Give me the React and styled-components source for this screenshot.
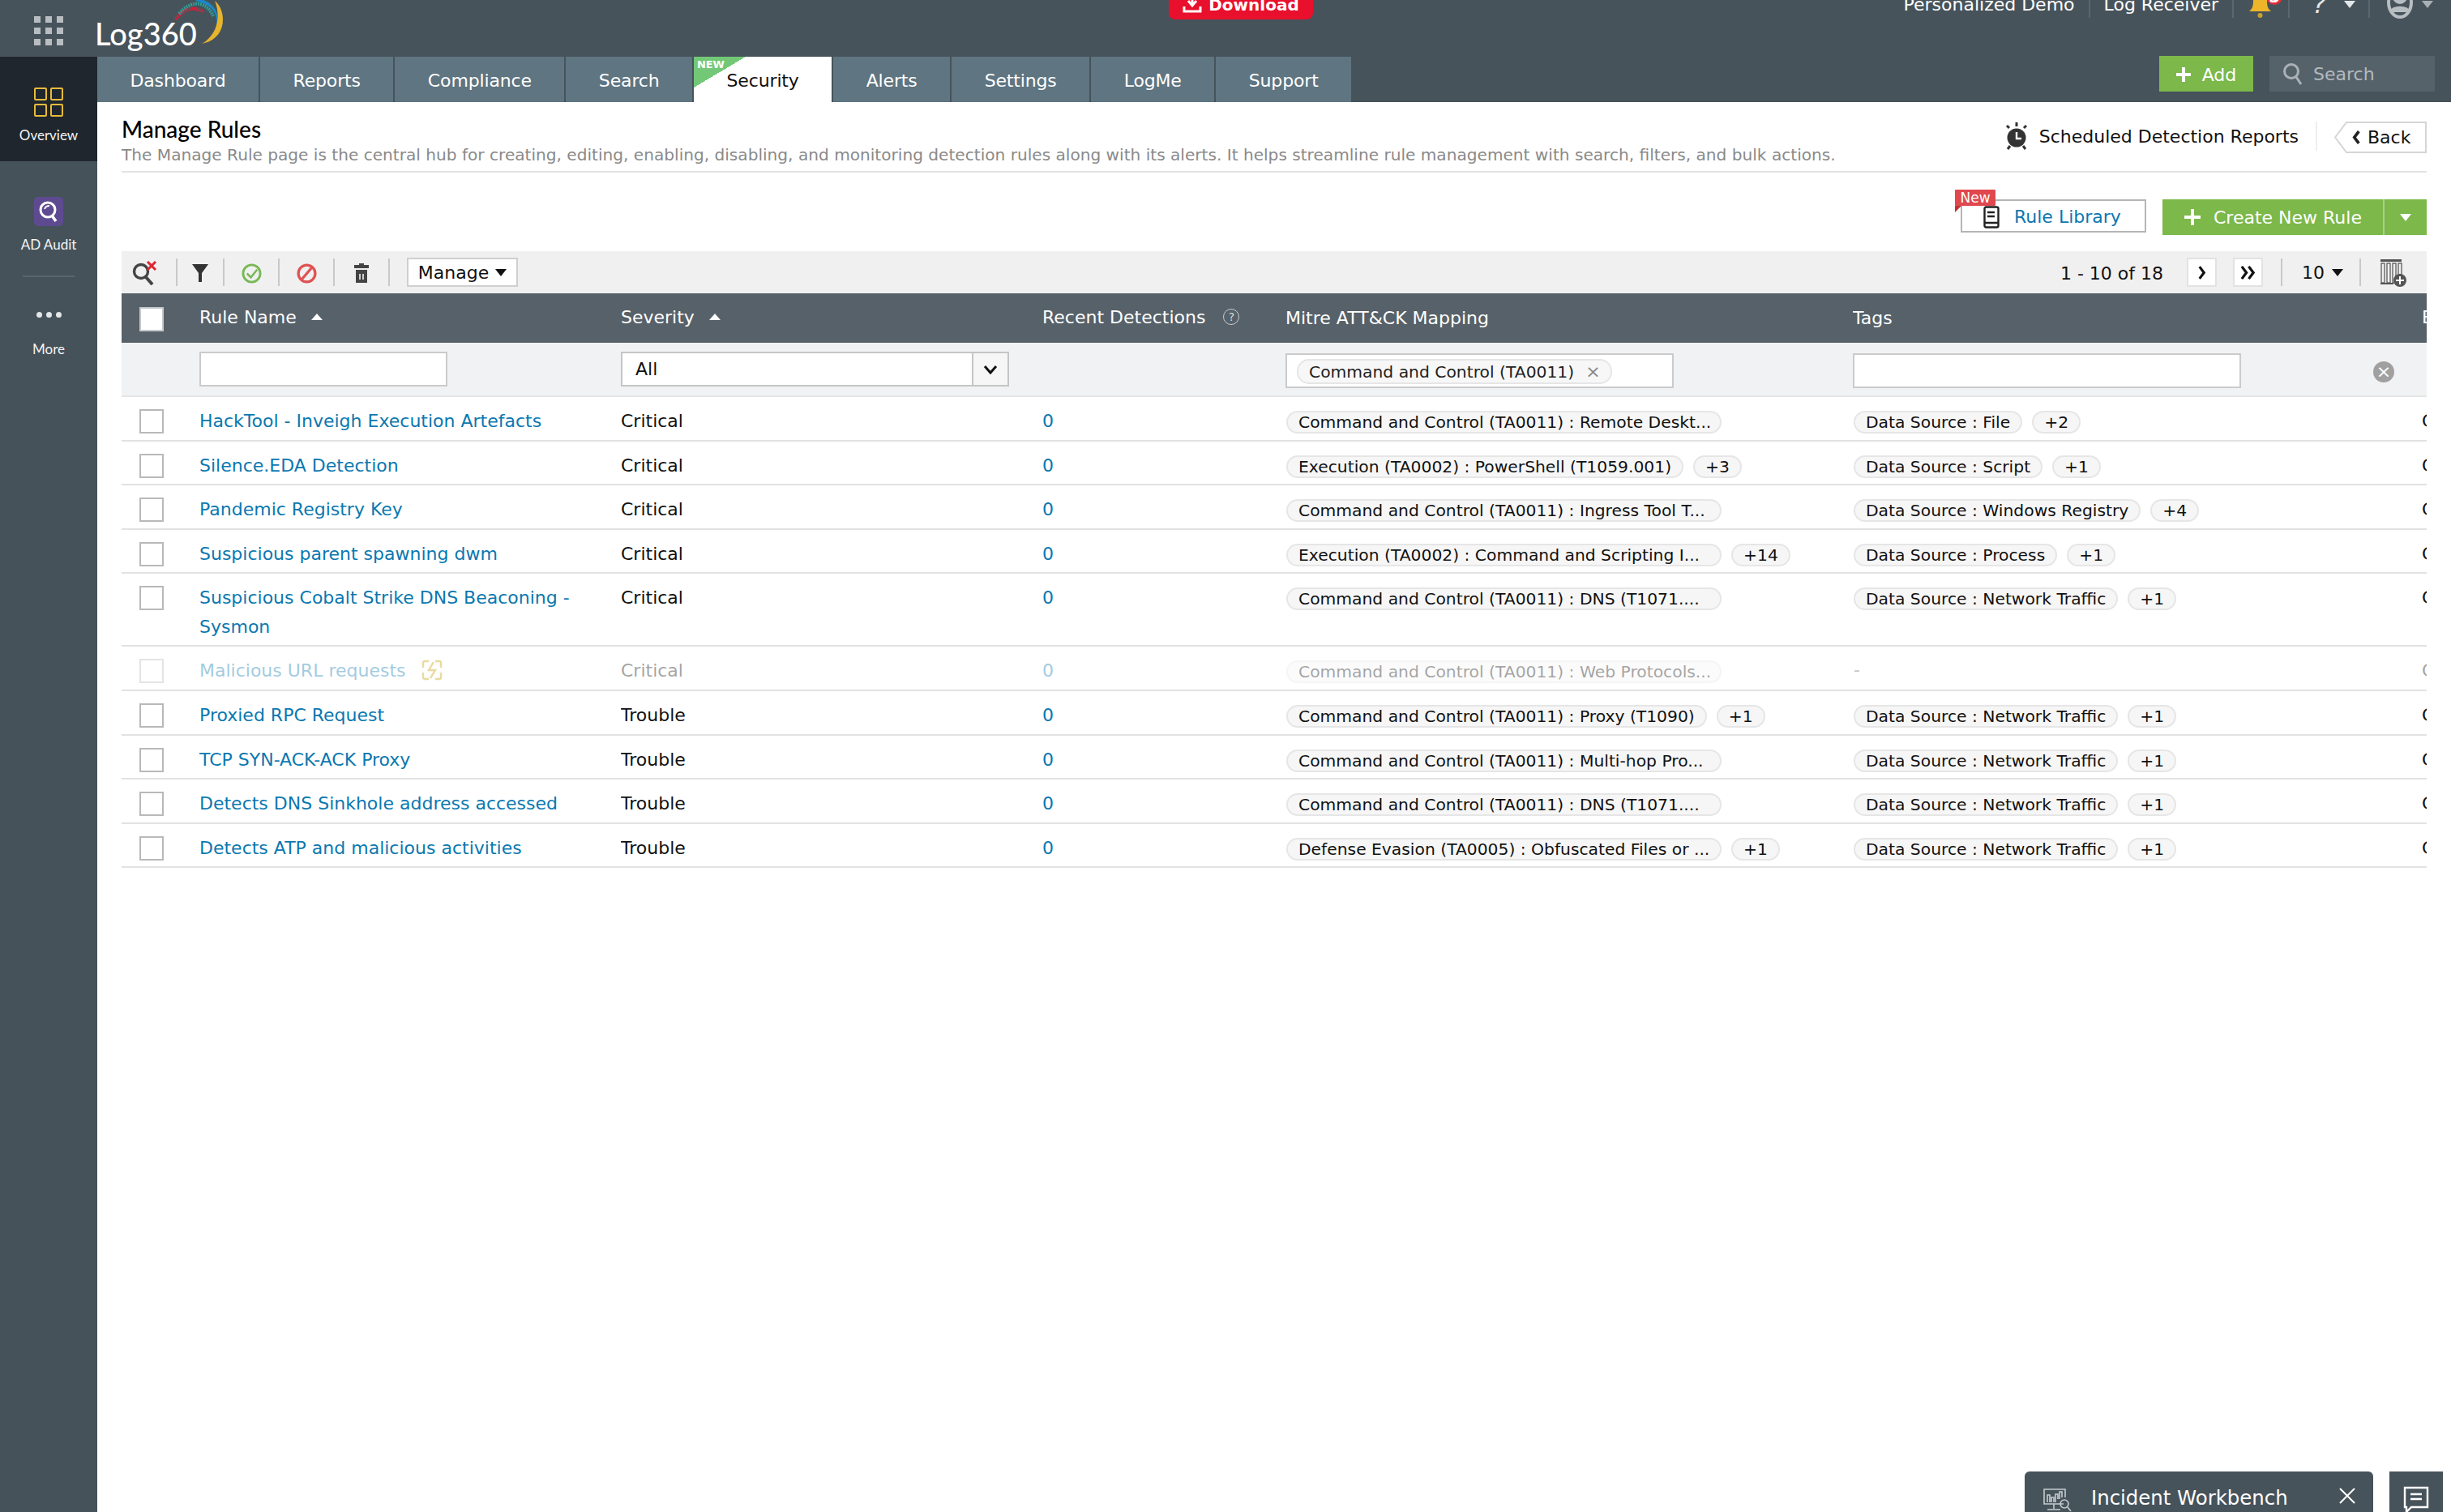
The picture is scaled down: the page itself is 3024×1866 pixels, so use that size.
// App.jsx
import React from "react";
import styled, { createGlobalStyle } from "styled-components";

const tabs = ["Dashboard", "Reports", "Compliance", "Search", "Security", "Alerts", "Settings", "LogMe", "Support"];

const rules = [
  { name: "HackTool - Inveigh Execution Artefacts", severity: "Critical", mitre: "Command and Control (TA0011) : Remote Deskt...", mitreMore: "", tag: "Data Source : File", tagMore: "+2" },
  { name: "Silence.EDA Detection", severity: "Critical", mitre: "Execution (TA0002) : PowerShell (T1059.001)", mitreMore: "+3", tag: "Data Source : Script", tagMore: "+1" },
  { name: "Pandemic Registry Key", severity: "Critical", mitre: "Command and Control (TA0011) : Ingress Tool T...", mitreMore: "", tag: "Data Source : Windows Registry", tagMore: "+4" },
  { name: "Suspicious parent spawning dwm", severity: "Critical", mitre: "Execution (TA0002) : Command and Scripting I...", mitreMore: "+14", tag: "Data Source : Process", tagMore: "+1" },
  { name: "Suspicious Cobalt Strike DNS Beaconing - Sysmon", severity: "Critical", mitre: "Command and Control (TA0011) : DNS (T1071....", mitreMore: "", tag: "Data Source : Network Traffic", tagMore: "+1", tall: true },
  { name: "Malicious URL requests", severity: "Critical", mitre: "Command and Control (TA0011) : Web Protocols...", mitreMore: "", tag: "", tagMore: "", disabled: true },
  { name: "Proxied RPC Request", severity: "Trouble", mitre: "Command and Control (TA0011) : Proxy (T1090)", mitreMore: "+1", tag: "Data Source : Network Traffic", tagMore: "+1" },
  { name: "TCP SYN-ACK-ACK Proxy", severity: "Trouble", mitre: "Command and Control (TA0011) : Multi-hop Pro...", mitreMore: "", tag: "Data Source : Network Traffic", tagMore: "+1" },
  { name: "Detects DNS Sinkhole address accessed", severity: "Trouble", mitre: "Command and Control (TA0011) : DNS (T1071....", mitreMore: "", tag: "Data Source : Network Traffic", tagMore: "+1" },
  { name: "Detects ATP and malicious activities", severity: "Trouble", mitre: "Defense Evasion (TA0005) : Obfuscated Files or ...", mitreMore: "+1", tag: "Data Source : Network Traffic", tagMore: "+1" },
];

const App = () => {
  return (
    <Page>
      <GlobalStyle />
      <TopBar>
        <TopLeft>
          <AppsGrid>
            {Array.from({ length: 9 }).map((_, i) => (
              <i key={i} />
            ))}
          </AppsGrid>
          <Logo>
            Log360
            <LogoArcs viewBox="0 0 60 56" width="60" height="56">
              <path d="M2 24C10 12 24 6 36 15" fill="none" stroke="#d8213a" strokeWidth="4" strokeDasharray="2 1" />
              <path d="M6 17C18 2 38 -2 48 20" fill="none" stroke="#2f9c95" strokeWidth="4" strokeDasharray="2 1" />
              <path d="M30 -2C46 2 58 14 52 32C54 16 46 6 26 1Z" fill="#1d87c4" />
              <path d="M34 54C50 51 60 40 60 24C60 14 56 6 50 1C57 18 55 42 34 54Z" fill="#e7b52c" />
            </LogoArcs>
          </Logo>
        </TopLeft>
        <DownloadBtn>
          <svg viewBox="0 0 24 24" width="24" height="24" fill="none" stroke="#fff" strokeWidth="3">
            <path d="M12 0v13M7 9l5 6 5-6M2 16v6h20v-6" />
          </svg>
          Download
        </DownloadBtn>
        <TopRight>
          <TopLink $pad="0 17px 0 0">Personalized Demo</TopLink>
          <TopLink $pad="0 17px 0 17px">Log Receiver</TopLink>
          <TopLink $pad="0 6px 0 19px">
            <svg viewBox="0 0 42 36" width="42" height="36">
              <path d="M0 27c4-3 5-7 5-13S8 2 13.500 2 22 8 22 14s1 10 5 13z" fill="#eeb52b" />
              <circle cx="13.500" cy="32" r="3" fill="#c9a030" />
              <circle cx="31" cy="9" r="10" fill="#e2303f" />
              <text x="31" y="16" fontSize="20" fontWeight="700" fill="#fff" textAnchor="middle">5</text>
            </svg>
          </TopLink>
          <TopLink $pad="0 16px 0 28px">
            <HelpMark>?</HelpMark>
            <Caret $size={7} $color="#e4e7e9" />
          </TopLink>
          <UserMenu>
            <svg viewBox="0 0 32 44" width="32" height="44" fill="none" stroke="#b7bdc1" strokeWidth="4">
              <ellipse cx="16" cy="24" rx="14" ry="18" />
              <circle cx="16" cy="17" r="7" fill="#b7bdc1" />
              <path d="M5 36c3-7 19-7 22 0" fill="#b7bdc1" />
            </svg>
            <Caret $size={7} $color="#a9b0b5" />
          </UserMenu>
        </TopRight>
      </TopBar>

      <Body>
        <Sidebar>
          <SideItem $active>
            <OverviewIcon>
              <i />
              <i />
              <i />
              <i />
            </OverviewIcon>
            <SideLabel>Overview</SideLabel>
          </SideItem>
          <SideAudit>
            <AuditIcon>
              <svg viewBox="0 0 36 36" width="36" height="36" fill="none">
                <circle cx="17" cy="16" r="9" stroke="#fff" strokeWidth="3" />
                <path d="M22 23l5 7" stroke="#fff" strokeWidth="3.5" />
                <path d="M13 15c1-3 3-4 6-4" stroke="#fff" strokeWidth="2" />
              </svg>
            </AuditIcon>
            <SideLabel>AD Audit</SideLabel>
          </SideAudit>
          <SideDivider />
          <SideMore>
            <Dots>
              <i />
              <i />
              <i />
            </Dots>
            <SideLabel>More</SideLabel>
          </SideMore>
        </Sidebar>

        <Main>
          <TabStrip>
            <TabList>
              {tabs.map((t) => (
                <Tab key={t} $active={t === "Security"}>
                  {t === "Security" && (
                    <NewCorner>
                      <span>NEW</span>
                    </NewCorner>
                  )}
                  {t}
                </Tab>
              ))}
            </TabList>
            <AddBtn>
              <PlusMark $size={18} />
              Add
            </AddBtn>
            <SearchBox>
              <svg viewBox="0 0 26 30" width="26" height="30" fill="none" stroke="#aab2b7" strokeWidth="3">
                <circle cx="11" cy="12" r="8.5" />
                <path d="M17 19l6 9" />
              </svg>
              Search
            </SearchBox>
          </TabStrip>

          <Content>
            <PageHead>
              <div>
                <Title>Manage Rules</Title>
                <Description>
                  The Manage Rule page is the central hub for creating, editing, enabling, disabling, and monitoring detection rules along with its alerts. It helps streamline rule management with search, filters, and bulk actions.
                </Description>
              </div>
              <HeadActions>
                <ReportLink>
                  <svg viewBox="0 0 28 34" width="28" height="34">
                    <circle cx="14" cy="19" r="11.500" fill="#333" />
                    <path d="M14 12v8h6" fill="none" stroke="#fff" strokeWidth="2.4" />
                    <path d="M5 7l-3 -3M23 7l3 -3M14 0v5M6 29l-3 4M22 29l3 4" stroke="#333" strokeWidth="3" />
                  </svg>
                  Scheduled Detection Reports
                </ReportLink>
                <BackBtn>
                  <BackShape viewBox="0 0 114 39" width="114" height="39">
                    <path d="M15 1H113V38H15L1 19.500Z" fill="#fff" stroke="#d5d5d5" strokeWidth="2" />
                  </BackShape>
                  <BackChevron viewBox="0 0 12 20" width="11" height="19" fill="none" stroke="#222" strokeWidth="4">
                    <path d="M9 2L3 10l6 8" />
                  </BackChevron>
                  <BackLabel>Back</BackLabel>
                </BackBtn>
              </HeadActions>
            </PageHead>

            <ActionRow>
              <LibraryBtn>
                <NewRibbon>New</NewRibbon>
                <svg viewBox="0 0 20 28" width="20" height="28" fill="none" stroke="#222" strokeWidth="2.4">
                  <rect x="1.5" y="1.5" width="17" height="25" rx="2" />
                  <path d="M5 8h9M5 13h9M1.5 21h17" />
                </svg>
                Rule Library
              </LibraryBtn>
              <CreateGroup>
                <CreateBtn>
                  <PlusMark $size={20} />
                  Create New Rule
                </CreateBtn>
                <CreateCaret>
                  <Caret $size={7} $color="#fff" />
                </CreateCaret>
              </CreateGroup>
            </ActionRow>

            <Toolbar>
              <ToolCell $first>
                <svg viewBox="0 0 32 30" width="32" height="30" fill="none">
                  <circle cx="11" cy="13" r="8.5" stroke="#444" strokeWidth="3.4" />
                  <path d="M17 20l8 9" stroke="#444" strokeWidth="4" />
                  <path d="M19 1l10 10M29 1L19 11" stroke="#e0262f" strokeWidth="3" />
                </svg>
              </ToolCell>
              <ToolCell>
                <svg viewBox="0 0 20 22" width="20" height="22">
                  <path d="M0 0h20L12 11v11H8V11z" fill="#333" />
                </svg>
              </ToolCell>
              <ToolCell>
                <svg viewBox="0 0 26 26" width="25" height="25" fill="none">
                  <circle cx="13" cy="13" r="11" stroke="#78b856" strokeWidth="3" />
                  <path d="M7 13l5 5 8-10" stroke="#78b856" strokeWidth="2.6" />
                </svg>
              </ToolCell>
              <ToolCell>
                <svg viewBox="0 0 26 26" width="25" height="25" fill="none" stroke="#e05252" strokeWidth="3.4">
                  <circle cx="13" cy="13" r="10.8" />
                  <path d="M19 6L7 20" />
                </svg>
              </ToolCell>
              <ToolCell>
                <svg viewBox="0 0 18 24" width="18" height="24">
                  <path d="M6 0h6v2h6v4H0V2h6zM2 8h14v16H2z" fill="#444" />
                  <path d="M7 13v7M11 13v7" stroke="#f0f0f0" strokeWidth="1.6" />
                </svg>
              </ToolCell>
              <ManageBtn>
                Manage
                <Caret $size={7} $color="#111" />
              </ManageBtn>
              <Pager>
                <PageInfo>1 - 10 of 18</PageInfo>
                <PageBtn>
                  <svg viewBox="0 0 12 20" width="11" height="19" fill="none" stroke="#111" strokeWidth="3.4">
                    <path d="M3 2l6 8-6 8" />
                  </svg>
                </PageBtn>
                <PageBtn>
                  <svg viewBox="0 0 20 20" width="19" height="19" fill="none" stroke="#111" strokeWidth="3.4">
                    <path d="M2 2l6 8-6 8M11 2l6 8-6 8" />
                  </svg>
                </PageBtn>
                <PageSize>
                  10
                  <Caret $size={7} $color="#111" />
                </PageSize>
                <ColumnChooser>
                  <svg viewBox="0 0 34 38" width="34" height="38">
                    <path d="M1 3h26v3H1z" fill="#555" />
                    <path d="M2 8h4v24H2zM9 8h4v24H9zM16 8h4v24h-4zM23 8h4v14h-4z" fill="none" stroke="#666" strokeWidth="1.4" />
                    <path d="M1 33h16" stroke="#555" strokeWidth="2" />
                    <circle cx="25" cy="29" r="8" fill="#555" />
                    <path d="M25 24v10M20 29h10" stroke="#fff" strokeWidth="2" />
                  </svg>
                </ColumnChooser>
              </Pager>
            </Toolbar>

            <HeadRow>
              <CheckCell>
                <CheckBox $head />
              </CheckCell>
              <HeadCell>
                Rule Name <SortUp />
              </HeadCell>
              <HeadCell>
                Severity <SortUp />
              </HeadCell>
              <HeadCell>
                Recent Detections
                <HelpCircle>?</HelpCircle>
              </HeadCell>
              <HeadCell $low>Mitre ATT&amp;CK Mapping</HeadCell>
              <HeadCell $low>Tags</HeadCell>
              <HeadCell>E</HeadCell>
            </HeadRow>

            <FilterRow>
              <span />
              <FilterInput $width={306} />
              <SelectBox>
                <SelectValue>All</SelectValue>
                <SelectArrow>
                  <svg viewBox="0 0 18 12" width="18" height="12" fill="none" stroke="#111" strokeWidth="3">
                    <path d="M2 2l7 8 7-8" />
                  </svg>
                </SelectArrow>
              </SelectBox>
              <span />
              <TokenBox>
                <TokenPill>
                  Command and Control (TA0011)
                  <TokenX>×</TokenX>
                </TokenPill>
              </TokenBox>
              <FilterInput $width={479} $low />
              <ClearBtn>×</ClearBtn>
            </FilterRow>

            {rules.map((r) => (
              <Row key={r.name} $tall={r.tall} $disabled={r.disabled}>
                <CheckCell $row>
                  <CheckBox />
                </CheckCell>
                <NameCell>
                  <RuleLink>{r.name}</RuleLink>
                  {r.disabled && (
                    <BoltBadge>
                      <svg viewBox="0 0 26 26" width="26" height="26" fill="none" stroke="#c79f0a" strokeWidth="2.4">
                        <path d="M9 2H4a2 2 0 0 0-2 2v6M17 2h5a2 2 0 0 1 2 2v6M9 24H4a2 2 0 0 1-2-2v-6M17 24h5a2 2 0 0 0 2-2v-6" />
                        <path d="M15 3l-6 10h8l-6 10" />
                      </svg>
                    </BoltBadge>
                  )}
                </NameCell>
                <Cell>{r.severity}</Cell>
                <CountCell>0</CountCell>
                <PillCell>
                  <Pill $clipped={r.mitre.endsWith("...")}>{r.mitre}</Pill>
                  {r.mitreMore && <Pill>{r.mitreMore}</Pill>}
                </PillCell>
                <PillCell>
                  {r.tag ? <Pill>{r.tag}</Pill> : <Dash>-</Dash>}
                  {r.tagMore && <Pill>{r.tagMore}</Pill>}
                </PillCell>
                <Cell>C</Cell>
              </Row>
            ))}
          </Content>
        </Main>
      </Body>

      <BottomDock>
        <WorkbenchTab>
          <svg viewBox="0 0 36 32" width="36" height="32" fill="none" stroke="#c5cbcf" strokeWidth="1.6">
            <path d="M26 20H2V2h26v10M14 20v6M6 27h16" />
            <path d="M6 18V9h3v9M11 18v-6h3v6M16 18V8h3v6M21 14V5h3v7" />
            <circle cx="27" cy="20" r="5" />
            <path d="M31 24l4 5" />
          </svg>
          <span>Incident Workbench</span>
          <svg viewBox="0 0 20 20" width="20" height="20" stroke="#fff" strokeWidth="2">
            <path d="M1 1l18 18M19 1L1 19" />
          </svg>
        </WorkbenchTab>
        <ChatTab>
          <svg viewBox="0 0 32 34" width="32" height="34" fill="none" stroke="#fff" strokeWidth="2.4">
            <path d="M2 2h28v24H10l-6 6v-6H2z" />
            <path d="M9 10h14M9 16h14" />
          </svg>
        </ChatTab>
      </BottomDock>
    </Page>
  );
};

export default App;

const GlobalStyle = createGlobalStyle`
  html, body {
    margin: 0;
    padding: 0;
    background: #fff;
    overflow: hidden;
  }
  * {
    box-sizing: border-box;
  }
`;

const Page = styled.div`
  width: 3024px;
  height: 1866px;
  overflow: hidden;
  font-family: "DejaVu Sans", Verdana, sans-serif;
  font-size: 22px;
  color: #111;
`;

const TopBar = styled.header`
  height: 70px;
  display: flex;
  background: #47535b;
  color: #fff;
`;

const TopLeft = styled.div`
  width: 1442px;
  display: flex;
  align-items: flex-start;
`;

const AppsGrid = styled.div`
  display: grid;
  grid-template-columns: repeat(3, 8px);
  gap: 6px;
  margin: 20px 0 0 42px;

  i {
    height: 8px;
    background: #b8bdc1;
  }
`;

const Logo = styled.div`
  position: relative;
  margin: 17px 0 0 39px;
  font-family: Lato, sans-serif;
  font-size: 38px;
  line-height: 48px;
  font-weight: 500;
`;

const LogoArcs = styled.svg`
  position: absolute;
  left: 98px;
  top: -17px;
  overflow: visible;
`;

const DownloadBtn = styled.div`
  width: 178px;
  height: 24px;
  display: flex;
  align-items: flex-end;
  justify-content: center;
  gap: 8px;
  padding-bottom: 8px;
  line-height: 20px;
  background: #e8102c;
  border-radius: 0 0 8px 8px;
  font-weight: 700;
  font-size: 20px;
`;

const TopRight = styled.div`
  margin-left: auto;
  height: 34px;
  margin-top: -12px;
  display: flex;
  align-items: center;
  padding-right: 22px;
`;

const TopLink = styled.div`
  height: 100%;
  display: flex;
  align-items: center;
  gap: 22px;
  padding: ${(p) => p.$pad};
  border-right: 2px solid #5b666e;
  white-space: nowrap;
`;

const HelpMark = styled.span`
  font-size: 32px;
  font-style: italic;
  color: #e4e7e9;
`;

const UserMenu = styled.div`
  display: flex;
  align-items: center;
  gap: 11px;
  padding-left: 21px;

  svg {
    margin-top: -8px;
  }
`;

const Caret = styled.i`
  display: inline-block;
  flex: none;
  width: 0;
  height: 0;
  border-left: ${(p) => p.$size}px solid transparent;
  border-right: ${(p) => p.$size}px solid transparent;
  border-top: ${(p) => p.$size + 2}px solid ${(p) => p.$color};
`;

const Body = styled.div`
  display: flex;
  height: 1796px;
`;

const Sidebar = styled.aside`
  width: 120px;
  flex: none;
  background: #46525a;
  color: #fff;
`;

const SideItem = styled.div`
  height: 129px;
  padding-top: 38px;
  background: ${(p) => (p.$active ? "#1f262d" : "transparent")};
  display: flex;
  flex-direction: column;
  align-items: center;
`;

const SideAudit = styled(SideItem)`
  height: 141px;
  padding-top: 44px;
`;

const SideMore = styled(SideItem)`
  height: 120px;
  padding-top: 35px;
`;

const SideLabel = styled.span`
  font-family: Lato, sans-serif;
  font-size: 17px;
  line-height: 22px;
  margin-top: 12px;
  color: #f3f4f5;
`;

const OverviewIcon = styled.div`
  display: grid;
  grid-template-columns: repeat(2, 16px);
  grid-auto-rows: 16px;
  gap: 4px;

  i {
    border: 2px solid #e8bb3a;
    border-radius: 2px;
  }
`;

const AuditIcon = styled.div`
  width: 36px;
  height: 36px;
  border-radius: 5px;
  background: #5e4a91;
`;

const SideDivider = styled.div`
  width: 64px;
  height: 2px;
  margin: 0 auto;
  background: #59656d;
`;

const Dots = styled.div`
  height: 22px;
  margin-bottom: 9px;
  display: flex;
  gap: 5px;
  align-items: center;

  i {
    width: 7px;
    height: 7px;
    border-radius: 50%;
    background: #e3e6e8;
  }
`;

const Main = styled.main`
  flex: 1;
  min-width: 0;
`;

const TabStrip = styled.nav`
  height: 56px;
  display: flex;
  background: #47535b;
  padding-right: 20px;
`;

const TabList = styled.div`
  display: flex;
  margin-right: auto;
`;

const Tab = styled.div`
  position: relative;
  height: 56px;
  padding: 2px 40.5px 0;
  display: flex;
  align-items: center;
  background: ${(p) => (p.$active ? "#fff" : "#5f7581")};
  color: ${(p) => (p.$active ? "#111" : "#fff")};
  border-right: 2px solid #47535b;
  letter-spacing: -0.15px;
`;

const NewCorner = styled.div`
  position: absolute;
  left: 0;
  top: 0;
  width: 64px;
  height: 38px;
  background: linear-gradient(to bottom right, #72c877 50%, transparent 50%);

  span {
    position: absolute;
    left: 4px;
    top: 2px;
    font-size: 13px;
    font-weight: 700;
    color: #fff;
  }
`;

const AddBtn = styled.div`
  width: 116px;
  height: 44px;
  margin-top: -1px;
  padding-top: 2px;
  display: flex;
  align-items: center;
  justify-content: center;
  gap: 14px;
  background: #7cb84a;
  color: #fff;
`;

const PlusMark = styled.i`
  display: inline-block;
  flex: none;
  width: ${(p) => p.$size}px;
  height: ${(p) => p.$size}px;
  background:
    linear-gradient(#fff, #fff) center / 100% 4px no-repeat,
    linear-gradient(#fff, #fff) center / 4px 100% no-repeat;
`;

const SearchBox = styled.div`
  width: 204px;
  height: 44px;
  margin: -1px 0 0 20px;
  padding-left: 16px;
  display: flex;
  align-items: center;
  gap: 12px;
  background: #56626a;
  color: #b3babf;
`;

const Content = styled.div`
  padding: 0 30px;
  height: 1740px;
`;

const PageHead = styled.div`
  height: 87px;
  padding-top: 16px;
  display: flex;
  justify-content: space-between;
  border-bottom: 2px solid #e3e3e3;
`;

const Title = styled.div`
  font-family: Lato, sans-serif;
  font-size: 28px;
  line-height: 34px;
  font-weight: 500;
  color: #000;
`;

const Description = styled.div`
  font-size: 20.13px;
  line-height: 30px;
  color: #8a8a8a;
  white-space: nowrap;
`;

const HeadActions = styled.div`
  display: flex;
  align-items: flex-start;
  margin-top: 8px;
`;

const ReportLink = styled.div`
  height: 36px;
  display: flex;
  align-items: center;
  gap: 14px;
  padding-right: 21px;
  border-right: 2px solid #eee;
  white-space: nowrap;
`;

const BackBtn = styled.div`
  position: relative;
  width: 114px;
  height: 39px;
  margin-left: 21px;
  padding-left: 22px;
  display: flex;
  align-items: center;
  gap: 8px;
`;

const BackShape = styled.svg`
  position: absolute;
  left: 0;
  top: 0;
`;

const BackChevron = styled.svg`
  position: relative;
  flex: none;
`;

const BackLabel = styled.span`
  position: relative;
`;

const ActionRow = styled.div`
  height: 97px;
  padding-top: 33px;
  display: flex;
  justify-content: flex-end;
  align-items: flex-start;
`;

const LibraryBtn = styled.div`
  position: relative;
  width: 229px;
  height: 41px;
  display: flex;
  align-items: center;
  gap: 18px;
  padding: 2px 0 0 26px;
  border: 2px solid #b5b5b5;
  color: #0b78b0;
`;

const NewRibbon = styled.span`
  position: absolute;
  left: -9px;
  top: -14px;
  width: 50px;
  height: 20px;
  background: #e0484e;
  color: #fff;
  font-size: 17px;
  line-height: 20px;
  text-align: center;
  border-radius: 1px;

  &::after {
    content: "";
    position: absolute;
    left: 0;
    top: 100%;
    border-top: 8px solid #c23238;
    border-left: 8px solid transparent;
    transform: scaleX(-1);
  }
`;

const CreateGroup = styled.div`
  display: flex;
  margin-left: 20px;
  height: 44px;
  color: #fff;
  background: #7cb84a;
`;

const CreateBtn = styled.div`
  width: 274px;
  display: flex;
  align-items: center;
  gap: 16px;
  padding-left: 27px;
  border-right: 2px solid #a9d08a;
  white-space: nowrap;
`;

const CreateCaret = styled.div`
  width: 52px;
  display: flex;
  align-items: center;
  justify-content: center;
`;

const Toolbar = styled.div`
  height: 52px;
  display: flex;
  align-items: center;
  background: #f0f0f0;
`;

const ToolCell = styled.div`
  height: 34px;
  width: ${(p) => (p.$first ? "69px" : "68px")};
  display: flex;
  align-items: center;
  justify-content: center;
  padding-right: ${(p) => (p.$first ? "10px" : "0")};
  border-right: 2px solid #c9c9c9;

  &:nth-child(2) {
    width: 58px;
  }

  svg {
    margin-top: 2px;
  }
`;

const ManageBtn = styled.div`
  width: 137px;
  height: 36px;
  margin-left: 21px;
  display: flex;
  align-items: center;
  justify-content: center;
  gap: 8px;
  background: #fff;
  border: 2px solid #cfcfcf;
`;

const Pager = styled.div`
  margin-left: auto;
  display: flex;
  align-items: center;
  height: 34px;
`;

const PageInfo = styled.span`
  margin-right: 29px;
  padding-top: 2px;
  white-space: nowrap;
`;

const PageBtn = styled.div`
  width: 37px;
  height: 36px;
  margin-right: 20px;
  display: flex;
  align-items: center;
  justify-content: center;
  background: #fff;
  border: 2px solid #e2e2e2;
`;

const PageSize = styled.div`
  height: 34px;
  margin-left: 2px;
  padding: 0 20px 0 24px;
  display: flex;
  align-items: center;
  gap: 9px;
  border-left: 2px solid #c9c9c9;
  border-right: 2px solid #c9c9c9;
`;

const ColumnChooser = styled.div`
  width: 81px;
  padding-left: 23px;
  display: flex;
  align-items: center;
`;

const columns = "96px 520px 520px 300px 700px 702px 1fr";

const HeadRow = styled.div`
  height: 61px;
  display: grid;
  grid-template-columns: ${columns};
  align-items: center;
  background: #576169;
  color: #fff;
`;

const CheckCell = styled.div`
  padding-left: 22px;
  display: flex;
  padding-top: ${(p) => (p.$row ? "15px" : "2px")};
`;

const CheckBox = styled.div`
  width: 30px;
  height: 30px;
  background: #fff;
  border: 2px solid ${(p) => (p.$head ? "#c5c9cc" : "#b9b9b9")};
`;

const HeadCell = styled.div`
  display: flex;
  align-items: center;
  gap: 10px;
  padding-top: ${(p) => (p.$low ? "2px" : "0")};
  margin-top: -3px;
  white-space: nowrap;
  overflow: hidden;
`;

const SortUp = styled.i`
  margin-left: 8px;
  border-left: 7px solid transparent;
  border-right: 7px solid transparent;
  border-bottom: 8px solid #fff;
`;

const HelpCircle = styled.span`
  width: 20px;
  height: 20px;
  margin-left: 12px;
  border: 1.5px solid #c9cdd0;
  border-radius: 50%;
  font-size: 14px;
  line-height: 18px;
  text-align: center;
  color: #d5d8da;
`;

const FilterRow = styled.div`
  height: 67px;
  display: grid;
  grid-template-columns: ${columns};
  align-items: center;
  background: #f1f2f3;
  border-bottom: 2px solid #e6e6e6;
`;

const FilterInput = styled.input`
  display: block;
  width: ${(p) => p.$width}px;
  height: 43px;
  margin-top: ${(p) => (p.$low ? "4px" : "0")};
  background: #fff;
  border: 2px solid #cbcbcb;
  outline: none;
`;

const SelectBox = styled.div`
  width: 479px;
  height: 43px;
  display: flex;
  background: #fff;
  border: 2px solid #c5c5c5;
`;

const SelectValue = styled.span`
  flex: 1;
  padding-left: 16px;
  line-height: 39px;
`;

const SelectArrow = styled.span`
  width: 44px;
  display: flex;
  align-items: center;
  justify-content: center;
  background: #f6f6f6;
  border-left: 2px solid #c5c5c5;
`;

const TokenBox = styled.div`
  width: 479px;
  height: 43px;
  margin-top: 4px;
  padding: 5px 12px;
  background: #fff;
  border: 2px solid #cbcbcb;
`;

const TokenPill = styled.span`
  display: inline-flex;
  align-items: center;
  height: 31px;
  gap: 14px;
  padding: 0 12px 0 13px;
  font-size: 20.3px;
  color: #222;
  background: #f7f7f7;
  border: 2px solid #e6e6e6;
  border-radius: 15px;
`;

const TokenX = styled.span`
  color: #888;
  font-size: 22px;
`;

const ClearBtn = styled.span`
  width: 26px;
  height: 26px;
  margin: 6px 0 0 -60px;
  border-radius: 50%;
  background: #a0a0a0;
  color: #fff;
  font-size: 22px;
  line-height: 25px;
  text-align: center;
`;

const Row = styled.div`
  height: ${(p) => (p.$tall ? "90px" : "54.6px")};
  display: grid;
  grid-template-columns: ${columns};
  border-bottom: 2px solid #e2e2e2;

  & > * {
    opacity: ${(p) => (p.$disabled ? 0.38 : 1)};
  }
`;

const Cell = styled.div`
  padding-top: 12px;
  line-height: 36px;
  overflow: hidden;
`;

const NameCell = styled(Cell)`
  padding-right: 60px;
`;

const RuleLink = styled.a`
  color: #0b78b0;
  cursor: pointer;
`;

const BoltBadge = styled.span`
  display: inline-block;
  margin-left: 20px;
  vertical-align: -5px;
`;

const CountCell = styled(Cell)`
  color: #0b78b0;
`;

const PillCell = styled.div`
  display: flex;
  gap: 12px;
  padding: 17px 0 0 1px;
  align-items: flex-start;
`;

const Pill = styled.span`
  height: 28px;
  ${(p) => p.$clipped && "width: 537px;"}
  padding: 0 13px;
  font-size: 20.3px;
  line-height: 24px;
  color: #111;
  background: #f6f6f6;
  border: 2px solid #e6e6e6;
  border-radius: 14px;
  white-space: nowrap;
`;

const Dash = styled.span`
  color: #666;
  line-height: 24px;
`;

const BottomDock = styled.div`
  position: fixed;
  right: 10px;
  bottom: 0;
  display: flex;
  gap: 20px;
  color: #fff;
`;

const WorkbenchTab = styled.div`
  width: 430px;
  height: 50px;
  padding: 17px 22px 0;
  display: flex;
  align-items: flex-start;
  background: #47535b;
  border-radius: 6px 6px 0 0;
  font-size: 24.4px;
  line-height: 32px;

  span {
    margin: 0 auto 0 24px;
  }

  svg {
    flex: none;
    margin-top: 3px;
  }
`;

const ChatTab = styled.div`
  width: 66px;
  height: 50px;
  padding-top: 18px;
  display: flex;
  justify-content: center;
  background: #47535b;
`;
